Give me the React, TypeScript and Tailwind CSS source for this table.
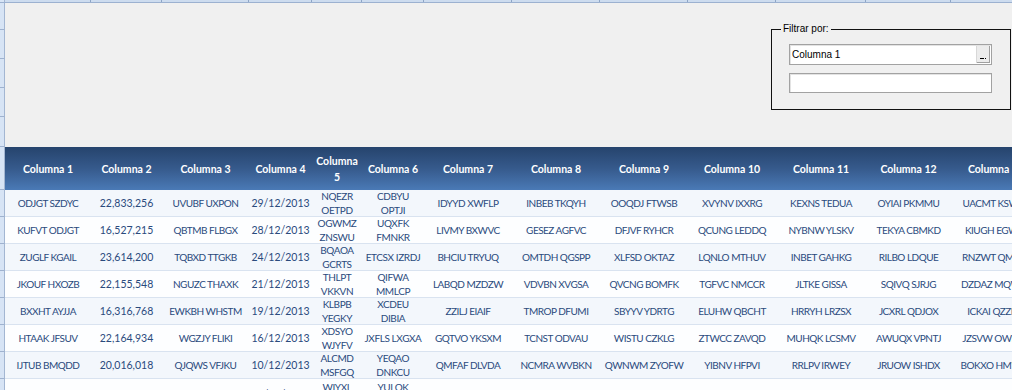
import React from "react";

const WC = [
  "w-[86px]",
  "w-[71px]",
  "w-[87px]",
  "w-[63px]",
  "w-[50px]",
  "w-[62px]",
  "w-[88px]",
  "w-[88px]",
  "w-[88px]",
  "w-[88px]",
  "w-[90px]",
  "w-[85px]",
  "w-[90px]",
];

// numeric/date columns keep natural spacing, text columns are tightened
const TC = [
  "text-[10px] tracking-[-0.5px]",
  "text-[10.5px]",
  "text-[10px] tracking-[-0.5px]",
  "text-[10.5px]",
  "text-[10px] tracking-[-0.4px]",
  "text-[10px] tracking-[-0.4px]",
  "text-[10px] tracking-[-0.5px]",
  "text-[10px] tracking-[-0.5px]",
  "text-[10px] tracking-[-0.5px]",
  "text-[10px] tracking-[-0.5px]",
  "text-[10px] tracking-[-0.5px]",
  "text-[10px] tracking-[-0.5px]",
  "text-[10px] tracking-[-0.5px]",
];

const HEADERS = [
  "Columna 1",
  "Columna 2",
  "Columna 3",
  "Columna 4",
  "Columna|5",
  "Columna 6",
  "Columna 7",
  "Columna 8",
  "Columna 9",
  "Columna 10",
  "Columna 11",
  "Columna 12",
  "Columna 13",
];

const ROWS: string[][] = [
  ["ODJGT SZDYC", "22,833,256", "UVUBF UXPON", "29/12/2013", "NQEZR|OETPD", "CDBYU|OPTJI", "IDYYD XWFLP", "INBEB TKQYH", "OOQDJ FTWSB", "XVYNV IXXRG", "KEXNS TEDUA", "OYIAI PKMMU", "UACMT KSWRE"],
  ["KUFVT ODJGT", "16,527,215", "QBTMB FLBGX", "28/12/2013", "OGWMZ|ZNSWU", "UQXFK|FMNKR", "LIVMY BXWVC", "GESEZ AGFVC", "DFJVF RYHCR", "QCUNG LEDDQ", "NYBNW YLSKV", "TEKYA CBMKD", "KIUGH EGWLT"],
  ["ZUGLF KGAIL", "23,614,200", "TQBXD TTGKB", "24/12/2013", "BQAOA|GCRTS", "ETCSX IZRDJ", "BHCIU TRYUQ", "OMTDH QGSPP", "XLFSD OKTAZ", "LQNLO MTHUV", "INBET GAHKG", "RILBO LDQUE", "RNZWT QMPAS"],
  ["JKOUF HXOZB", "22,155,548", "NGUZC THAXK", "21/12/2013", "THLPT|VKKVN", "QIFWA|MMLCP", "LABQD MZDZW", "VDVBN XVGSA", "QVCNG BOMFK", "TGFVC NMCCR", "JLTKE GISSA", "SQIVQ SJRJG", "DZDAZ MQWTE"],
  ["BXXHT AYJJA", "16,316,768", "EWKBH WHSTM", "19/12/2013", "KLBPB|YEGKY", "XCDEU|DIBIA", "ZZILJ EIAIF", "TMROP DFUMI", "SBYYV YDRTG", "ELUHW QBCHT", "HRRYH LRZSX", "JCXRL QDJOX", "ICKAI QZZNU"],
  ["HTAAK JFSUV", "22,164,934", "WGZJY FLIKI", "16/12/2013", "XDSYO|WJYFV", "JXFLS LXGXA", "GQTVO YKSXM", "TCNST ODVAU", "WISTU CZKLG", "ZTWCC ZAVQD", "MUHQK LCSMV", "AWUQX VPNTJ", "JZSVW OWRKA"],
  ["IJTUB BMQDD", "20,016,018", "QJQWS VFJKU", "10/12/2013", "ALCMD|MSFGQ", "YEQAO|DNKCU", "QMFAF DLVDA", "NCMRA WVBKN", "QWNWM ZYOFW", "YIBNV HFPVI", "RRLPV IRWEY", "JRUOW ISHDX", "BOKXO HMWPL"],
  ["KPRSE MWQAB", "18,442,901", "HZLMT OQWEN", "08/12/2013", "WIYXL|FRQNM", "YULOK|ZPDAS", "TRQMA VNEXC", "GDFKO PLWUA", "MZEPT RKBYS", "OVLAH CJXNE", "PESTD KUQMB", "FYNOC WAHRI", "SLUMG TXEQV"],
];

function Lines({ text }: { text: string }) {
  const parts = text.split("|");
  return (
    <>
      {parts.map((p, i) => (
        <span key={i} className="block whitespace-nowrap">
          {p}
        </span>
      ))}
    </>
  );
}

function LeftCell({ className = "" }: { className?: string }) {
  return (
    <div
      className={
        "w-[5px] shrink-0 bg-[#d7e4f5] border-r border-r-[#a3b6d2] border-b border-b-[#9fb2cf] " +
        className
      }
    />
  );
}

export default function App() {
  return (
    <div className="w-[1012px] h-[390px] overflow-hidden bg-white flex flex-col font-['Lato','Noto_Sans',sans-serif]">
      {/* top strip (sheet column headers) */}
      <div className="flex h-[3px] shrink-0 bg-[#cddcef] border-b border-[#9cb1d0]">
        <div className="w-[5px] shrink-0 border-r border-[#a3b6d2] bg-[#d7e4f5]" />
        {WC.map((w, i) => (
          <div key={i} className={w + " shrink-0 border-r border-[#8ea5c6]"} />
        ))}
      </div>

      {/* grey area with filter box */}
      <div className="flex h-[144px] shrink-0">
        <div className="w-[5px] shrink-0 flex flex-col">
          <LeftCell className="h-[27px]" />
          <LeftCell className="h-[29px]" />
          <LeftCell className="h-[29px]" />
          <LeftCell className="h-[29px]" />
          <LeftCell className="h-[30px]" />
        </div>
        <div className="flex-1 bg-[#f0f0f0] flex justify-end items-start pt-[26px] pr-[1px]">
          <div className="relative w-[240px] h-[81px] border border-[#111] pl-[17px] pt-[14px] flex flex-col gap-[8px] font-['Liberation_Sans',Arial,sans-serif]">
            <span className="absolute -top-[8px] left-[9px] px-[2px] bg-[#f0f0f0] text-[10px] leading-[14px] text-black">
              Filtrar por:
            </span>
            <div className="flex w-[203px] h-[21px] bg-white border border-[#a2a2a2] shadow-[inset_1px_1px_0_#e3e3e3]">
              <div className="flex-1 flex items-center pl-[2px] text-[10px] text-black">
                Columna 1
              </div>
              <div className="relative w-[14px] my-[1px] mr-[1px] bg-[#ececec] border-l border-[#d8d8d8] shadow-[inset_-1px_-1px_0_#a0a0a0]">
                <span className="absolute left-[3px] bottom-[4px] w-[4px] h-[1px] bg-black" />
                <span className="absolute left-[8px] bottom-[4px] w-[1px] h-[1px] bg-black" />
              </div>
            </div>
            <div className="w-[203px] h-[20px] bg-white border border-[#a2a2a2] shadow-[inset_1px_1px_0_#e3e3e3]" />
          </div>
        </div>
      </div>

      {/* table header */}
      <div className="flex h-[43px] shrink-0">
        <LeftCell className="h-[43px]" />
        <div className="flex bg-linear-to-b from-[#26446d] via-[#365a8c] to-[#4a7ab6]">
          {HEADERS.map((h, i) => (
            <div
              key={i}
              className={
                WC[i] +
                " shrink-0 flex flex-col items-center justify-center text-center text-white font-bold text-[10.5px] leading-[16px]"
              }
            >
              <Lines text={h} />
            </div>
          ))}
        </div>
      </div>

      {/* data rows */}
      {ROWS.map((row, r) => {
        const last = r === ROWS.length - 1;
        return (
          <div key={r} className={"flex shrink-0 " + (last ? "h-[31px]" : "h-[27px]")}>
            <LeftCell className={last ? "h-[31px]" : "h-[27px]"} />
            <div
              className={
                "flex border-b border-[#d9e3f0] " +
                (r % 2 === 0 ? "bg-[#f3f7fc]" : "bg-[#fdfeff]")
              }
            >
              {row.map((c, i) => (
                <div
                  key={i}
                  className={
                    WC[i] +
                    " " +
                    TC[i] +
                    " shrink-0 flex flex-col items-center justify-center text-center overflow-hidden text-[#2a4a7d] leading-[14px]"
                  }
                >
                  <Lines text={c} />
                </div>
              ))}
            </div>
          </div>
        );
      })}
    </div>
  );
}
